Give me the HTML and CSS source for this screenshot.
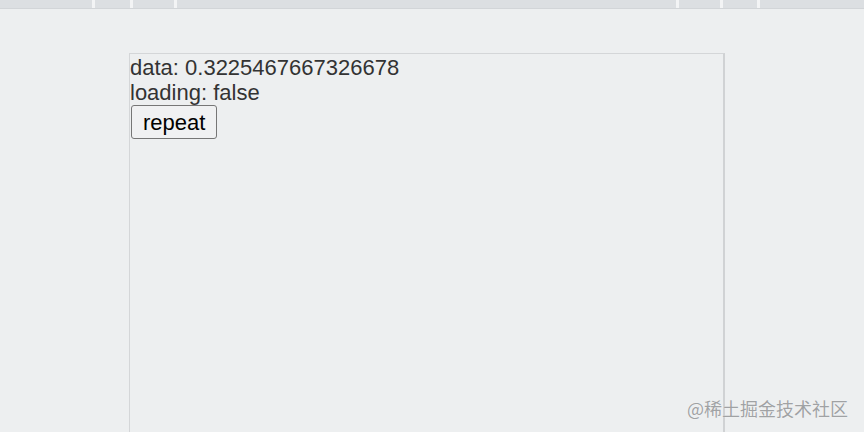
FILE: index.html
```html
<!DOCTYPE html>
<html>
<head>
<meta charset="utf-8">
<link rel="stylesheet" href="styles.css">
</head>
<body>
<div class="topbar">
  <div class="seg s1"></div>
  <div class="seg s2"></div>
  <div class="seg s3"></div>
  <div class="seg s4"></div>
  <div class="seg s5"></div>
  <div class="seg s6"></div>
  <div class="seg s7"></div>
</div>
<div class="frame">
  <div class="line">data: 0.3225467667326678</div>
  <div class="line">loading: false</div>
  <button class="btn">repeat</button>
</div>
<div class="watermark">@稀土掘金技术社区</div>
</body>
</html>
```
FILE: styles.css
```css
html, body {
  margin: 0;
  padding: 0;
  background: #edeff0;
  overflow: hidden;
  height: 432px;
}
body {
  position: relative;
  font-family: "Liberation Sans", Arial, sans-serif;
}
.topbar {
  display: flex;
  gap: 3px;
  height: 8px;
  border-bottom: 1px solid #d2d5d8;
  background: #f3f4f5;
}
.seg {
  background: #dcdfe2;
  height: 100%;
}
.s1 { width: 92px; }
.s2 { width: 35px; }
.s3 { width: 41px; }
.s4 { width: 499px; }
.s5 { width: 41px; }
.s6 { width: 34px; }
.s7 { flex: 1; }
.frame {
  box-sizing: border-box;
  margin: 44px 0 0 129px;
  padding-top: 1px;
  width: 596px;
  height: 379px;
  border: 1px solid #d4d6d8;
  border-bottom: none;
  border-right: 2px solid #d0d2d4;
  font-size: 22px;
  color: #333;
}
.line {
  line-height: 25px;
}
.btn {
  display: block;
  margin: 0 0 0 1px;
  font-family: "Liberation Sans", Arial, sans-serif;
  font-size: 22px;
  color: #000;
  line-height: 25px;
  padding: 3px 11px 3px 11px;
  background: #f0f1f2;
  border: 1px solid #767676;
  border-radius: 3px;
  height: 34px;
}
.watermark {
  position: absolute;
  left: 687px;
  top: 397px;
  font-family: "Noto Sans CJK SC", sans-serif;
  font-size: 18px;
  line-height: 22px;
  color: #a0a2a4;
  text-shadow: 0 0 1px #ffffff;
}
```
